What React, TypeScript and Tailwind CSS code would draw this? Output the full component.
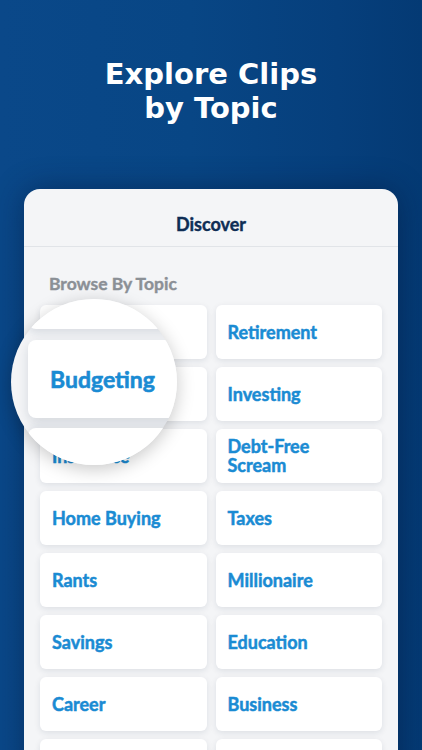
import React from "react";

const topics: string[][] = [
  ["Debt", "Retirement"],
  ["Budgeting", "Investing"],
  ["Insurance", "Debt-Free Scream"],
  ["Home Buying", "Taxes"],
  ["Rants", "Millionaire"],
  ["Savings", "Education"],
  ["Career", "Business"],
  ["Marriage", "Giving"],
];

const font = { fontFamily: "Lato, 'Open Sans', sans-serif" };

const Tile: React.FC<{label: string}> = ({label}) => (
  <div className="h-[54px] rounded-md bg-white px-3 flex items-center shadow-[0_2px_6px_rgba(20,40,70,0.10)]">
    <span className="text-[18px] leading-[19px] font-bold text-[#1a8bd3] w-[110px] [-webkit-text-stroke:0.5px_#1a8bd3]">
      {label}
    </span>
  </div>
);

const App: React.FC = () => {
  return (
    <div
      className="relative w-[422px] h-[750px] overflow-hidden bg-[linear-gradient(90deg,#0a4889_0%,#084685_45%,#063f7c_80%,#043a74_100%)]"
      style={font}
    >
      <div className="relative flex flex-col items-center">
        <h1 className="mt-[57px] text-center text-white font-bold text-[29px] leading-[34px] [font-family:'DejaVu_Sans',sans-serif]">
          Explore Clips
          <br />
          by Topic
        </h1>

        {/* phone panel */}
        <div className="mt-[64px] w-[374px] h-[600px] rounded-t-[16px] bg-[#f4f5f7] shadow-[0_0_30px_rgba(0,20,50,0.45)] overflow-hidden">
          <div className="h-[58px] pt-[24px] flex justify-center border-b border-[#e1e4e8]">
            <span className="text-[18px] leading-[22px] font-bold text-[#0e2d55] [-webkit-text-stroke:0.4px_#0e2d55]">
              Discover
            </span>
          </div>
          <div className="px-4">
            <div className="pl-[9px] pt-[26px] pb-[10px] text-[17.5px] leading-[22px] font-bold text-[#8b9096] [-webkit-text-stroke:0.4px_#8b9096]">
              Browse By Topic
            </div>
            <div className="grid grid-cols-2 gap-x-[9px] gap-y-[8px]">
              {topics.flat().map((t) => (
                <Tile key={t} label={t} />
              ))}
            </div>
          </div>
        </div>
      </div>

      {/* magnifier */}
      <div className="absolute left-[11px] top-[299px] w-[166px] h-[166px] rounded-full overflow-hidden bg-[#f4f5f7] shadow-[0_4px_18px_rgba(0,0,0,0.22)]">
        <div className="absolute left-[17px] top-[-40px] w-[200px] h-[70px] rounded-lg bg-white shadow-[0_4px_10px_rgba(20,40,70,0.12)]" />
        <div className="absolute left-[17px] top-[41px] w-[200px] h-[78px] rounded-lg bg-white shadow-[0_4px_12px_rgba(20,40,70,0.14)] flex items-center">
          <span className="ml-[22px] text-[23px] font-bold text-[#1a8bd3] [-webkit-text-stroke:0.6px_#1a8bd3]">
            Budgeting
          </span>
        </div>
        <div className="absolute left-[17px] top-[129px] w-[200px] h-[80px] rounded-lg bg-white shadow-[0_-2px_10px_rgba(20,40,70,0.10)]" />
      </div>
    </div>
  );
};

export default App;
